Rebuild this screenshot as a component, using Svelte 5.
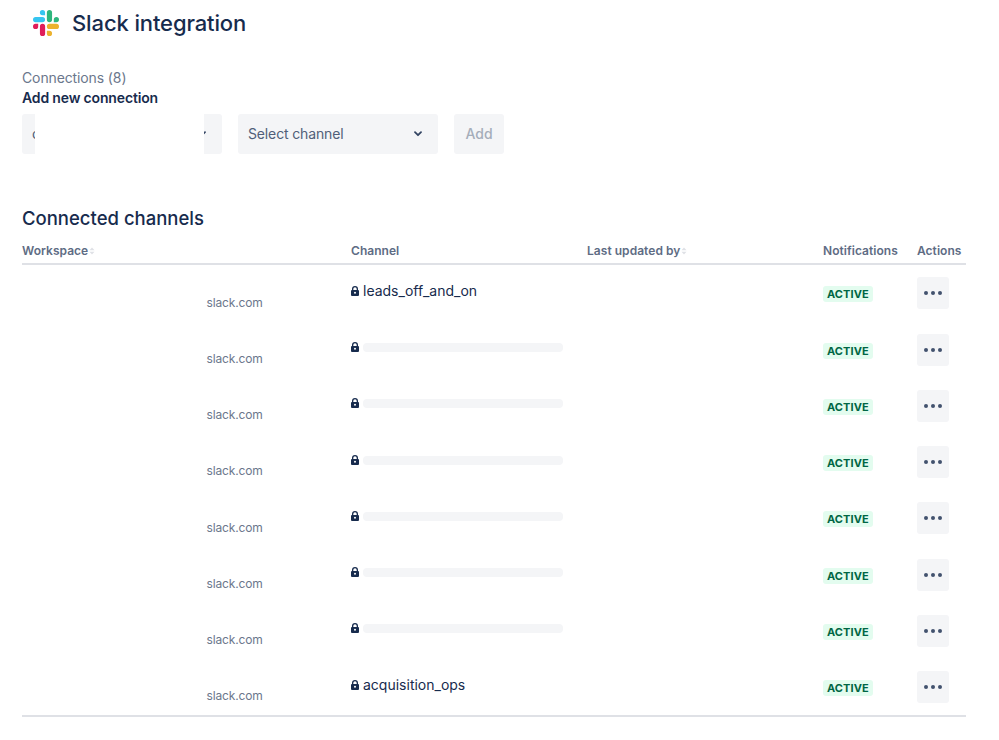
<script>
  const rows = [
    { name: 'leads_off_and_on' },
    { name: '' }, { name: '' }, { name: '' }, { name: '' }, { name: '' }, { name: '' },
    { name: 'acquisition_ops' }
  ];
</script>

<div class="page">
  <header class="head">
    <svg class="logo" viewBox="0 0 54 54" width="26" height="26" aria-hidden="true">
      <path fill="#36C5F0" d="M19.7 0a5.4 5.4 0 1 0 0 10.8h5.4V5.4A5.4 5.4 0 0 0 19.7 0zm0 14.4H5.4a5.4 5.4 0 1 0 0 10.8h14.3a5.4 5.4 0 1 0 0-10.8z"/>
      <path fill="#2EB67D" d="M54 19.8a5.4 5.4 0 1 0-10.8 0v5.4h5.4a5.4 5.4 0 0 0 5.4-5.4zm-14.4 0V5.4a5.4 5.4 0 1 0-10.8 0v14.4a5.4 5.4 0 1 0 10.8 0z"/>
      <path fill="#ECB22E" d="M34.2 54a5.4 5.4 0 1 0 0-10.8h-5.4v5.4a5.4 5.4 0 0 0 5.4 5.4zm0-14.4h14.4a5.4 5.4 0 1 0 0-10.8H34.2a5.4 5.4 0 1 0 0 10.8z"/>
      <path fill="#E01E5A" d="M0 34.2a5.4 5.4 0 1 0 10.8 0v-5.4H5.4A5.4 5.4 0 0 0 0 34.2zm14.4 0v14.4a5.4 5.4 0 1 0 10.8 0V34.2a5.4 5.4 0 1 0-10.8 0z"/>
    </svg>
    <h1>Slack integration</h1>
  </header>

  <p class="count">Connections (8)</p>
  <p class="addlabel">Add new connection</p>

  <div class="form">
    <div class="select first">
      <span class="val">c</span>
      <svg class="chev" viewBox="0 0 10 6" width="10" height="6"><path d="M2 1.200l3 3 3-3" fill="none" stroke="#344563" stroke-width="1.800" stroke-linecap="round" stroke-linejoin="round"/></svg>
      <div class="mask"></div>
    </div>
    <div class="select">
      <span class="val">Select channel</span>
      <svg class="chev" viewBox="0 0 10 6" width="10" height="6"><path d="M2 1.200l3 3 3-3" fill="none" stroke="#344563" stroke-width="1.800" stroke-linecap="round" stroke-linejoin="round"/></svg>
    </div>
    <button class="add" disabled>Add</button>
  </div>

  <h2>Connected channels</h2>

  <div class="table">
    <div class="row headrow">
      <div class="th">Workspace<svg class="sort" viewBox="0 0 6 8" width="6" height="8"><path d="M3 .5 5.500 3.300H.5zM3 7.500.5 4.700h5z" fill="#dfe1e6"/></svg></div>
      <div class="th">Channel</div>
      <div class="th">Last updated by<svg class="sort" viewBox="0 0 6 8" width="6" height="8"><path d="M3 .5 5.500 3.300H.5zM3 7.500.5 4.700h5z" fill="#dfe1e6"/></svg></div>
      <div class="th">Notifications</div>
      <div class="th">Actions</div>
    </div>

    {#each rows as row}
      <div class="row body">
        <div class="ws"><span>slack.com</span></div>
        <div class="chan">
          <svg class="lock" viewBox="0 0 8 10" width="8" height="10"><path fill="#172b4d" d="M1 4V2.900a3 2.900 0 0 1 6 0V4a1 1 0 0 1 1 1v4a1 1 0 0 1-1 1H1a1 1 0 0 1-1-1V5a1 1 0 0 1 1-1zm1.300 0h3.400V2.900a1.700 1.700 0 0 0-3.400 0zM4 5.800a1 1 0 1 0 0 2 1 1 0 0 0 0-2z" fill-rule="evenodd"/></svg>
          {#if row.name}
            <span class="cname">{row.name}</span>
          {:else}
            <span class="bar"></span>
          {/if}
        </div>
        <div></div>
        <div class="notif"><span class="lozenge">ACTIVE</span></div>
        <div class="act">
          <button class="more" aria-label="More actions"><i></i><i></i><i></i></button>
        </div>
      </div>
    {/each}
  </div>
</div>

<style>
  :global(body) {
    margin: 0;
    background: #fff;
  }
  .page {
    font-family: Inter, "Liberation Sans", sans-serif;
    color: #172b4d;
    width: 944px;
    padding: 0 0 0 22px;
  }
  .head {
    display: flex;
    align-items: center;
    height: 46px;
    padding-left: 11px;
    gap: 13px;
  }
  .logo {
    display: block;
  }
  h1 {
    margin: 0;
    font-size: 22px;
    line-height: 46px;
    font-weight: 500;
    letter-spacing: -0.12px;
  }
  .count {
    margin: 22px 0 0;
    font-size: 14px;
    line-height: 20px;
    color: #6b778c;
    letter-spacing: -0.12px;
  }
  .addlabel {
    margin: 0;
    font-size: 14px;
    line-height: 20px;
    font-weight: 600;
    letter-spacing: -0.16px;
  }
  .form {
    display: flex;
    gap: 16px;
    margin-top: 6px;
  }
  .select {
    position: relative;
    display: flex;
    align-items: center;
    justify-content: space-between;
    width: 200px;
    height: 40px;
    box-sizing: border-box;
    padding: 0 15px 0 10px;
    background: #f4f5f7;
    border-radius: 3px;
    font-size: 14px;
    color: #505f79;
  }
  .val {
    letter-spacing: -0.14px;
    line-height: 20px;
    margin-top: -1px;
  }
  .mask {
    position: absolute;
    left: 13px;
    top: 0;
    width: 169px;
    height: 40px;
    background: #fff;
  }
  .add {
    width: 50px;
    height: 40px;
    border: 0;
    border-radius: 3px;
    background: #f4f5f7;
    color: #a5adba;
    font: 500 14px Inter, "Liberation Sans", sans-serif;
    padding: 0 0 1px;
  }
  h2 {
    margin: 52px 0 0;
    font-size: 18.5px;
    line-height: 24px;
    font-weight: 500;
  }
  .table {
    margin-top: 6px;
    border-bottom: 2px solid #dfe1e6;
  }
  .row {
    display: grid;
    grid-template-columns: 329px 236px 236px 94px 49px;
  }
  .headrow {
    height: 27.25px;
    border-bottom: 2px solid #dfe1e6;
    align-items: center;
  }
  .th {
    font-size: 12px;
    font-weight: 600;
    color: #5e6c84;
    display: flex;
    align-items: center;
    gap: 1px;
    line-height: 16px;
    letter-spacing: 0.04px;
    padding-top: 2px;
  }
  .body {
    height: 56.25px;
  }
  .ws {
    font-size: 12px;
    color: #6b778c;
    padding-top: 30.25px;
    padding-left: 184.500px;
    line-height: 14px;
    letter-spacing: -0.14px;
  }
  .chan {
    display: flex;
    align-items: center;
    gap: 4px;
    height: 20px;
    margin-top: 15.5px;
  }
  .lock {
    flex: none;
  }
  .cname {
    font-size: 14px;
    line-height: 20px;
    color: #172b4d;
  }
  .bar {
    width: 200px;
    height: 9px;
    margin-top: 1px;
    background: #f4f5f7;
    border-radius: 4px;
  }
  .notif {
    padding-top: 21px;
  }
  .lozenge {
    display: inline-block;
    height: 16px;
    line-height: 16px;
    padding: 0 4px;
    background: #e3fcef;
    color: #006644;
    border-radius: 3px;
    font-size: 11px;
    font-weight: 700;
    letter-spacing: 0.1px;
    vertical-align: top;
  }
  .act {
    padding-top: 12px;
  }
  .more {
    display: flex;
    align-items: center;
    justify-content: center;
    gap: 3px;
    width: 32px;
    height: 32px;
    padding: 0;
    border: 0;
    border-radius: 3px;
    background: #f4f5f7;
  }
  .more i {
    width: 4px;
    height: 4px;
    border-radius: 50%;
    background: #42526e;
  }
</style>
